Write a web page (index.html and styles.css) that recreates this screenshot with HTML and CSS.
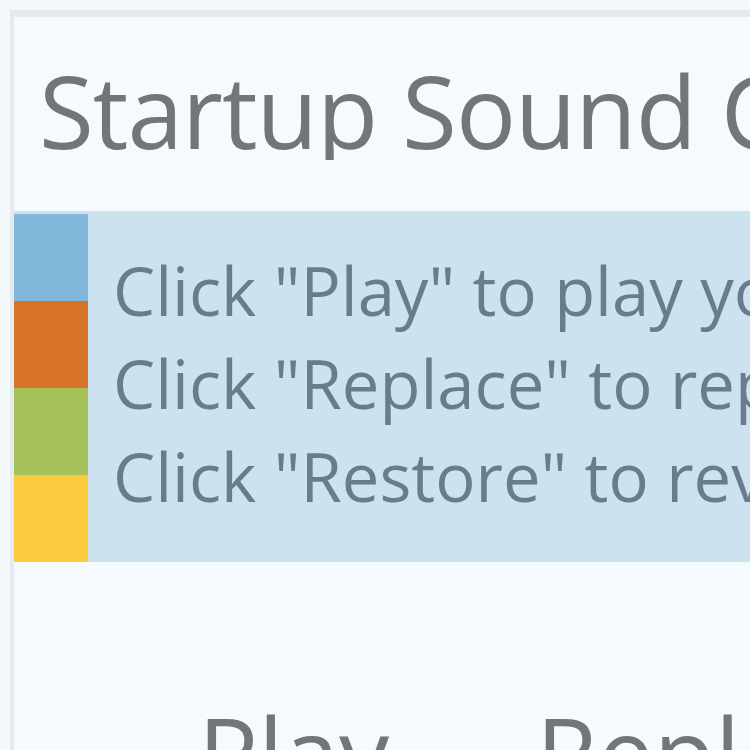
FILE: index.html
```html
<!DOCTYPE html>
<html lang="en">
<head>
  <meta charset="utf-8">
  <title>Startup Sound Changer</title>
  <link rel="stylesheet" href="styles.css">
</head>
<body>
  <div class="window">
    <h1 class="title">Startup Sound Changer</h1>

    <div class="band">
      <div class="strip">
        <span class="blk blue"></span>
        <span class="blk orange"></span>
        <span class="blk green"></span>
        <span class="blk yellow"></span>
      </div>
      <ul class="notes">
        <li>Click "Play" to play your current startup sound.</li>
        <li>Click "Replace" to replace your startup sound.</li>
        <li>Click "Restore" to revert to the default sound.</li>
      </ul>
    </div>

    <div class="actions">
      <button type="button" class="btn">Play</button>
      <button type="button" class="btn">Replace</button>
      <button type="button" class="btn">Restore</button>
    </div>
  </div>
</body>
</html>
```

FILE: styles.css
```css
:root {
  --page:     #f3f8fb;
  --frame:    #e3eaf0;
  --inner:    #f4fafd;
  --band:     #cde2ef;
  --title:    #727678;
  --note:     #6a7c8c;
  --blue:     #82b7dc;
  --orange:   #d8742a;
  --green:    #a5c059;
  --yellow:   #fccb3d;
}
* { margin:0; padding:0; box-sizing:border-box; }
html, body { height:100%; }
body {
  background:var(--page);
  font-family:"Open Sans","Noto Sans",sans-serif;
  overflow:hidden;
  padding:10px 0 0 10px;
}
.window {
  height:100%;
  background:var(--inner);
  border-left:4px solid var(--frame);
  border-top:7px solid var(--frame);
  overflow:hidden;
}
.title {
  font-weight:400;
  font-size:100px;
  line-height:100px;
  letter-spacing:-1px;
  color:var(--title);
  white-space:nowrap;
  overflow:hidden;
  padding:43px 0 0 25px;
}
.band {
  display:flex;
  margin:51px 0 0 -4px;
  height:351px;
  background:var(--band);
}
.strip {
  display:flex;
  flex-direction:column;
  width:78px;
  padding:3px 0 0 2px;
  flex:none;
}
.blk { display:block; height:87px; }
.blue   { background:var(--blue); }
.orange { background:var(--orange); }
.green  { background:var(--green); }
.yellow { background:var(--yellow); }
.notes {
  list-style:none;
  padding:33px 0 0 25px;
  font-size:67px;
  line-height:93px;
  color:var(--note);
  white-space:nowrap;
  overflow:hidden;
}
.actions {
  display:flex;
  padding:140px 0 0 184px;
}
.btn {
  flex:none;
  width:338px;
  text-align:left;
  background:none;
  border:none;
  font-family:inherit;
  font-size:100px;
  line-height:100px;
  color:var(--title);
}
```
